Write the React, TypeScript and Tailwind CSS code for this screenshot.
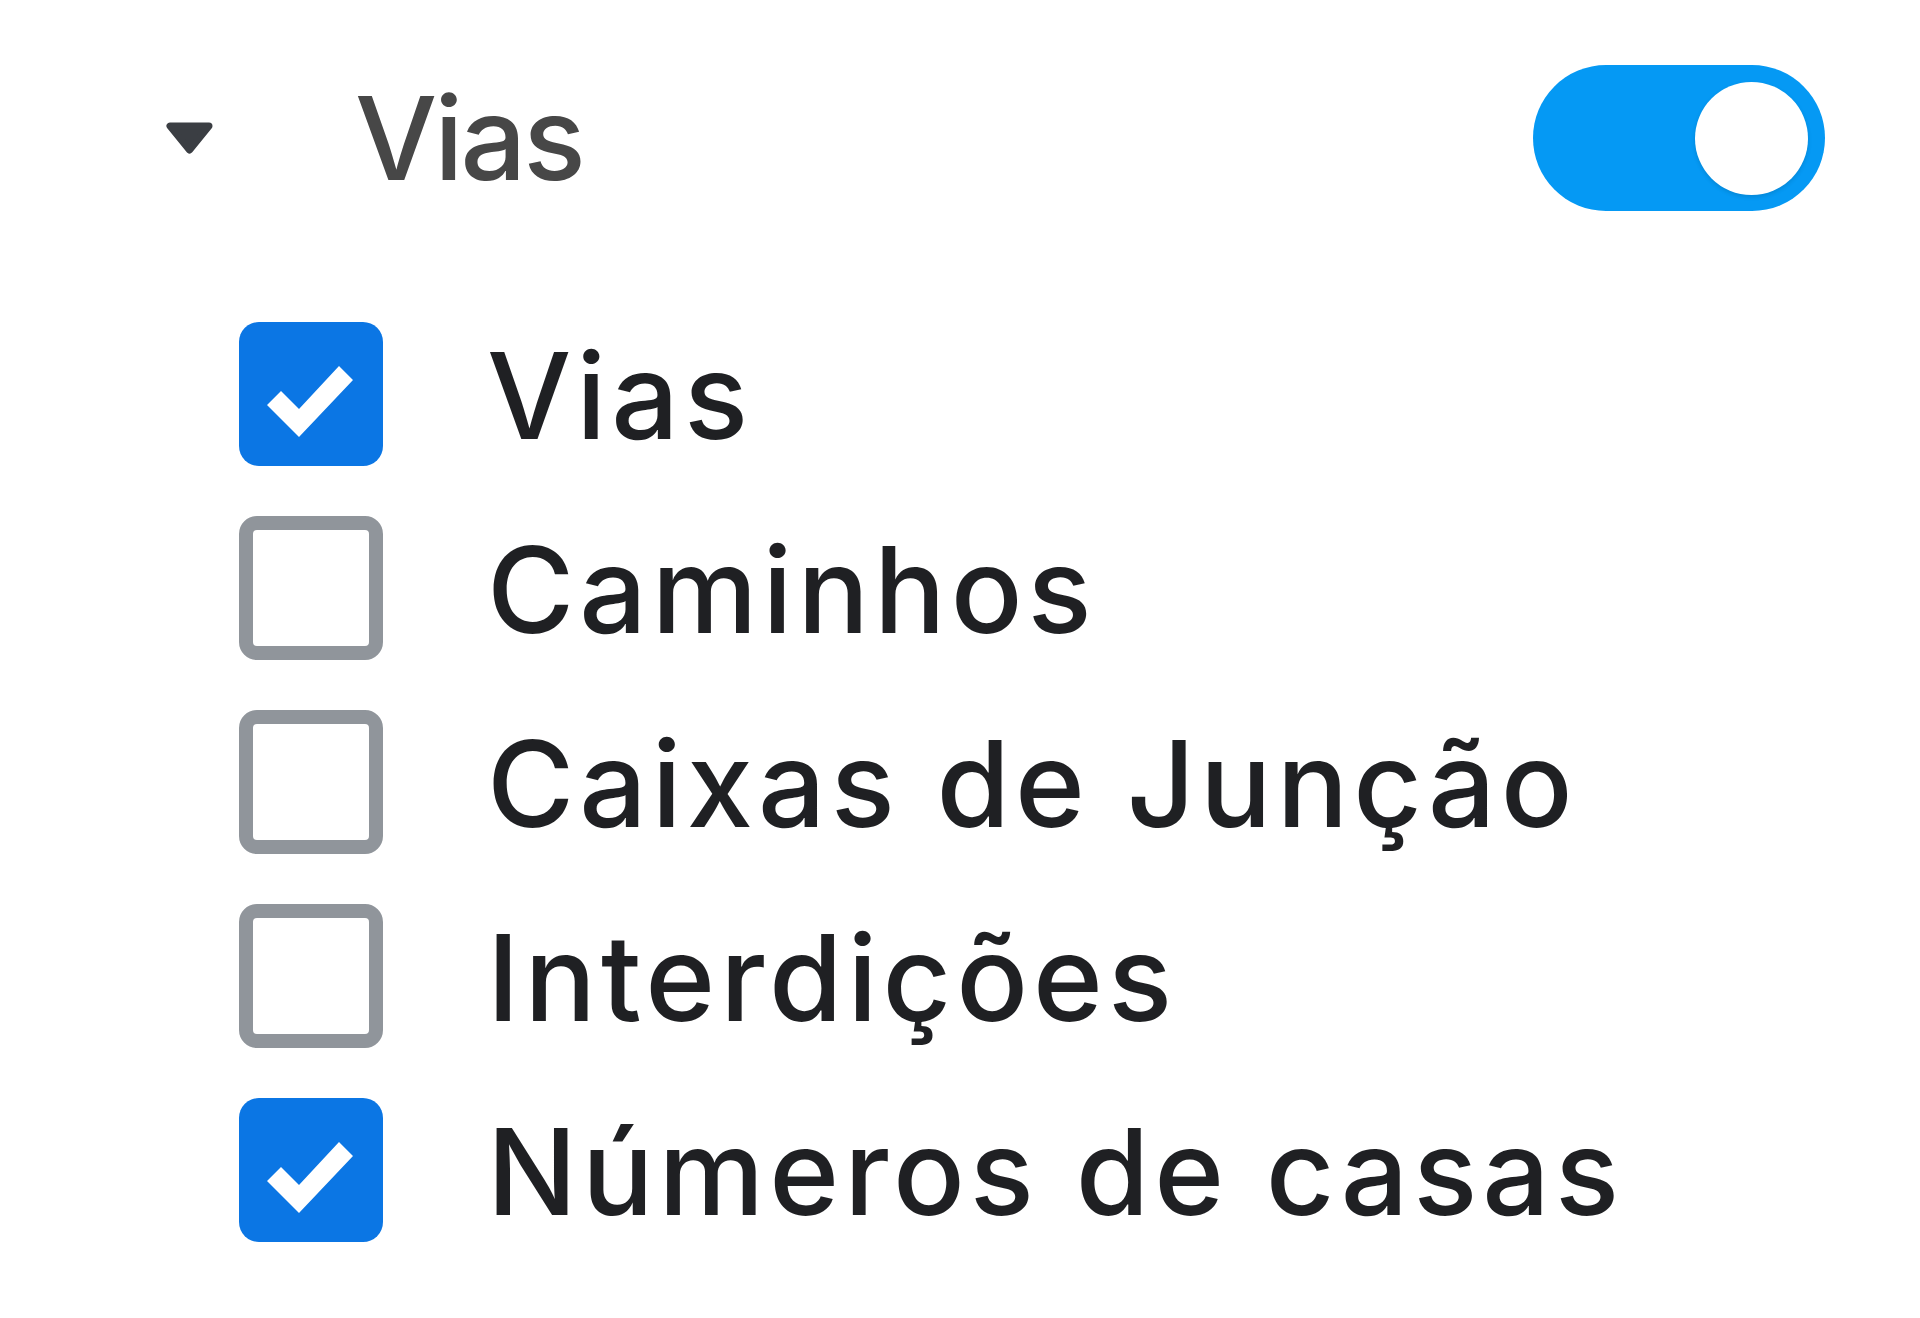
import { useState } from "react";

type Layer = { label: string; on: boolean };

const initialLayers: Layer[] = [
  { label: "Vias", on: true },
  { label: "Caminhos", on: false },
  { label: "Caixas de Junção", on: false },
  { label: "Interdições", on: false },
  { label: "Números de casas", on: true },
];

function Checkbox({ checked }: { checked: boolean }) {
  if (!checked) {
    return (
      <span className="block w-[144px] h-[144px] shrink-0 rounded-[18px] border-[14px] border-[#90959b] bg-white" />
    );
  }
  return (
    <span className="flex w-[144px] h-[144px] shrink-0 rounded-[20px] bg-[#0b76e4]">
      <svg viewBox="0 0 144 144" className="w-full h-full">
        <polygon
          points="42,69 60,87 100,44 114,58 60,115 28,83"
          fill="#ffffff"
        />
      </svg>
    </span>
  );
}

export default function App() {
  const [enabled, setEnabled] = useState(true);
  const [layers, setLayers] = useState(initialLayers);

  const toggle = (i: number) =>
    setLayers((prev) => prev.map((l, j) => (j === i ? { ...l, on: !l.on } : l)));

  return (
    <div
      className="w-[1920px] h-[1318px] bg-white text-[#1f2023] overflow-hidden"
      style={{ fontFamily: "Inter, 'Noto Sans', sans-serif" }}
    >
      <div className="flex items-center pl-[165px] pr-[95px] pt-[65px] h-[211px]">
        <svg viewBox="0 0 49 32" className="w-[49px] h-[32px] shrink-0">
          <polygon
            points="5,4 44,4 24.5,28"
            fill="#3b3e43"
            stroke="#3b3e43"
            strokeWidth="7"
            strokeLinejoin="round"
          />
        </svg>
        <span className="ml-[141px] text-[116px] leading-none font-medium text-[#474747] tracking-[-3px]">
          Vias
        </span>
        <button
          onClick={() => setEnabled(!enabled)}
          className={`ml-auto flex items-center w-[292px] h-[146px] rounded-full px-[17px] ${
            enabled ? "bg-[#0599f4] justify-end" : "bg-gray-300 justify-start"
          }`}
        >
          <span className="block w-[113px] h-[113px] rounded-full bg-white shadow-[0_2px_4px_rgba(0,0,0,0.12)]" />
        </button>
      </div>

      <ul className="flex flex-col gap-[50px] pl-[239px] mt-[111px]">
        {layers.map((l, i) => (
          <li
            key={l.label}
            onClick={() => toggle(i)}
            className="flex items-center h-[144px] cursor-pointer"
          >
            <Checkbox checked={l.on} />
            <span className="ml-[104px] pt-[4px] text-[119px] leading-none font-medium tracking-[5px] whitespace-nowrap">
              {l.label}
            </span>
          </li>
        ))}
      </ul>
    </div>
  );
}
